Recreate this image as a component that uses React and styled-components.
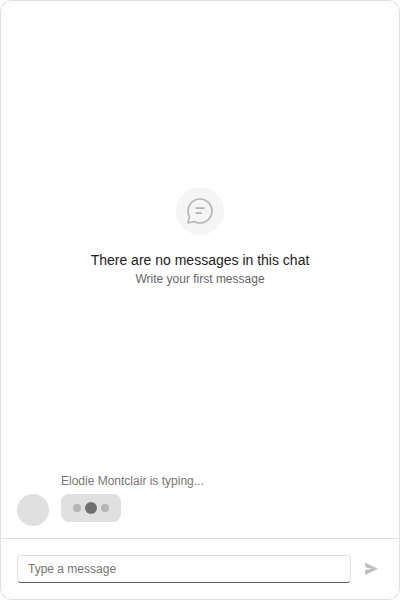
import React from "react";
import styled, { createGlobalStyle } from "styled-components";

const GlobalStyle = createGlobalStyle`
  *, *::before, *::after { box-sizing: border-box; }
  body { margin: 0; background: #fff; }
`;

const ChatWindow = styled.main`
  display: flex;
  flex-direction: column;
  width: 400px;
  height: 600px;
  overflow: hidden;
  border: 1px solid #e0e0e0;
  border-radius: 12px;
  background: #fff;
  color: #212121;
  font-family: "Liberation Sans", Arial, sans-serif;
`;

const EmptyState = styled.section`
  flex: 1;
  display: flex;
  flex-direction: column;
  align-items: center;
  justify-content: center;
  text-align: center;
`;

const IconBadge = styled.div`
  display: flex;
  align-items: center;
  justify-content: center;
  width: 48px;
  height: 48px;
  margin-bottom: 16px;
  border-radius: 50%;
  background: #f5f5f5;
  color: #b3b3b3;
`;

const Icon = styled.svg`
  display: block;
  width: ${({ $size }) => $size}px;
  height: ${({ $size }) => $size}px;
  fill: currentColor;
`;

const Title = styled.h2`
  margin: 0 0 2px;
  font-size: 14px;
  font-weight: 400;
  line-height: 18px;
`;

const Subtitle = styled.p`
  margin: 0;
  color: #666;
  font-size: 12px;
  line-height: 16px;
`;

const TypingRow = styled.div`
  display: flex;
  align-items: flex-end;
  gap: 12px;
  padding: 0 16px 12px;
`;

const Avatar = styled.div`
  width: 32px;
  height: 32px;
  border-radius: 50%;
  background: #e0e0e0;
`;

const TypingContent = styled.div`
  display: flex;
  flex-direction: column;
  align-items: flex-start;
  gap: 4px;
  padding-bottom: 4px;
`;

const TypingLabel = styled.span`
  color: #757575;
  font-size: 12px;
  line-height: 18px;
`;

const TypingBubble = styled.div`
  display: flex;
  align-items: center;
  gap: 4px;
  height: 28px;
  padding: 0 12px;
  border-radius: 8px;
  background: #e0e0e0;
`;

const Dot = styled.span`
  width: ${({ $active }) => ($active ? 12 : 8)}px;
  height: ${({ $active }) => ($active ? 12 : 8)}px;
  border-radius: 50%;
  background: ${({ $active }) => ($active ? "#707070" : "#b5b5b5")};
`;

const Composer = styled.form`
  display: flex;
  align-items: center;
  gap: 4px;
  height: 61px;
  padding: 0 12px 0 16px;
  border-top: 1px solid #e0e0e0;
`;

const MessageInput = styled.input`
  flex: 1;
  min-width: 0;
  height: 28px;
  padding: 0 10px;
  border: 1px solid #e0e0e0;
  border-bottom-color: #616161;
  border-radius: 4px;
  outline: none;
  background: #fff;
  color: #212121;
  font: 12px "Liberation Sans", Arial, sans-serif;

  &::placeholder {
    color: #757575;
    opacity: 1;
  }
`;

const SendButton = styled.button`
  display: flex;
  align-items: center;
  justify-content: center;
  width: 32px;
  height: 32px;
  padding: 0;
  border: 0;
  background: transparent;
  color: #bdbdbd;
`;

function ChatIcon() {
  return (
    <Icon $size={32} viewBox="0 0 20 20" aria-hidden="true">
      <path d="M10 2a8 8 0 1 1-3.61 15.14l-.12-.07-3.65.92a.5.5 0 0 1-.62-.45v-.08l.01-.08.92-3.64-.07-.12a7.95 7.95 0 0 1-.83-2.9l-.02-.37L2 10a8 8 0 0 1 8-8Zm0 1a7 7 0 0 0-6.11 10.41c.06.1.08.21.06.32l-.02.08-.76 3.01 3.02-.75a.5.5 0 0 1 .19-.01l.1.02.1.04A7 7 0 1 0 10 3Zm.7 7.8a.5.5 0 0 1 .09 1H7.7a.5.5 0 0 1-.09-1h3.09Zm2-3.1a.5.5 0 0 1 .09 1H7.7a.5.5 0 0 1-.09-1h5.09Z" />
    </Icon>
  );
}

function SendIcon() {
  return (
    <Icon $size={16} viewBox="0 0 16 16" aria-hidden="true">
      <path d="M1.9 1.4 15 7.7 1.9 14.1 2.3 9.1 9.2 7.8 2.6 6.6Z" />
    </Icon>
  );
}

export default function App() {
  return (
    <>
      <GlobalStyle />
      <ChatWindow>
        <EmptyState>
          <IconBadge>
            <ChatIcon />
          </IconBadge>
          <Title>There are no messages in this chat</Title>
          <Subtitle>Write your first message</Subtitle>
        </EmptyState>
        <TypingRow>
          <Avatar />
          <TypingContent>
            <TypingLabel>Elodie Montclair is typing...</TypingLabel>
            <TypingBubble>
              <Dot />
              <Dot $active />
              <Dot />
            </TypingBubble>
          </TypingContent>
        </TypingRow>
        <Composer onSubmit={(event) => event.preventDefault()}>
          <MessageInput placeholder="Type a message" aria-label="Message" />
          <SendButton type="submit" aria-label="Send">
            <SendIcon />
          </SendButton>
        </Composer>
      </ChatWindow>
    </>
  );
}
